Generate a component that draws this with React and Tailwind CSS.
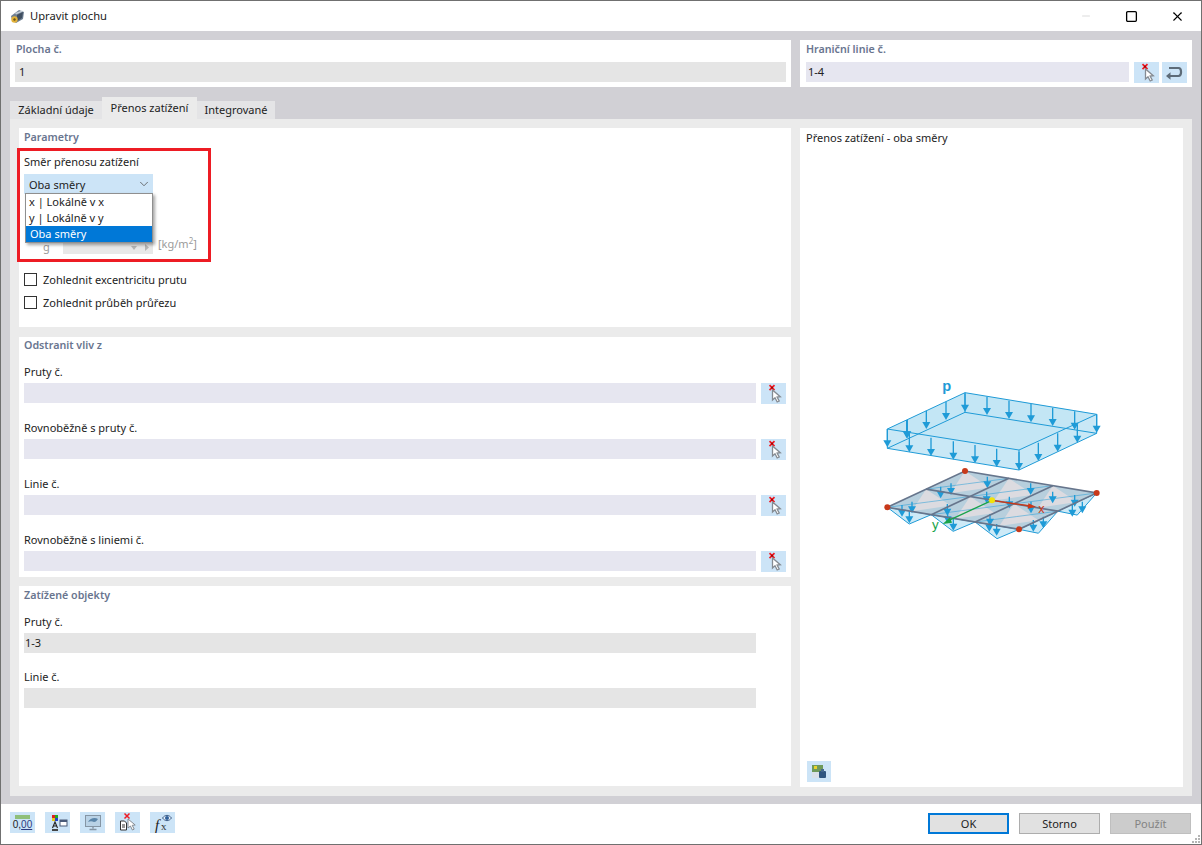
import React from 'react';
import { ChevronDown, Minus, Square, X } from 'lucide-react';

const font = { fontFamily: '"Noto Sans", "Liberation Sans", sans-serif' };

const A = [52, 412];
const U = [395, 66];
const V = [233, -109];
const pt = (u, v, dy = 0) => [A[0] + u * U[0] + v * V[0], A[1] + u * U[1] + v * V[1] + dy];
const str = (pts) => pts.map((p) => p.join(',')).join(' ');
const lerp = (p, q, t) => [p[0] + (q[0] - p[0]) * t, p[1] + (q[1] - p[1]) * t];

const Arrow = ({ x, y, len = 45 }) => (
  <g>
    <line x1={x} y1={y} x2={x} y2={y + len - 12} stroke="#1f9bd7" strokeWidth="4" />
    <polygon points={`${x - 12},${y + len - 18} ${x + 12},${y + len - 18} ${x},${y + len + 3}`} fill="#1f9bd7" />
  </g>
);

const LoadDiagram = () => {
  const cells = [];
  for (let i = 0; i < 3; i++) {
    for (let j = 0; j < 2; j++) {
      const u0 = i / 3, u1 = (i + 1) / 3, v0 = j / 2, v1 = (j + 1) / 2;
      const c = pt((u0 + u1) / 2, (v0 + v1) / 2);
      cells.push({ a: pt(u0, v0), b: pt(u1, v0), d: pt(u1, v1), e: pt(u0, v1), c, key: `${i}-${j}` });
    }
  }
  const frontTeeth = [0, 1, 2].map((i) => [pt(i / 3, 0), pt((i + 1) / 3, 0), pt((i + 0.5) / 3, 0, 39)]);
  const sideTeeth = [0, 1].map((j) => [pt(1, j / 2), pt(1, (j + 1) / 2), pt(1, (j + 0.5) / 2, 39)]);
  return (
    <svg width="240" height="180" viewBox="0 0 720 540" className="block">
      <text x="217" y="62" fontSize="44" fontWeight="700" fill="#1f9bd7" style={{ fontFamily: '"Liberation Sans", sans-serif' }}>p</text>
      {/* load block */}
      <polygon points="52,177 285,68 680,133 680,190 447,300 52,235" fill="#c9e8f6" />
      <polygon points="52,177 285,68 680,133 447,240" fill="#c3e6f5" />
      <g fill="none" stroke="#1f9bd7" strokeWidth="3">
        <polygon points="52,177 285,68 680,133 447,240" />
        <polyline points="52,177 52,235 447,300 680,190 680,133" />
        <line x1="447" y1="240" x2="447" y2="300" />
        <polyline points="52,235 285,127 680,190" />
        <line x1="285" y1="68" x2="285" y2="127" />
      </g>
      {[[285, 70], [351, 80], [417, 92], [483, 102], [548, 113], [614, 124], [680, 133], [110, 150], [169, 122], [228, 95], [52, 177]].map(([x, y]) => (
        <Arrow key={`${x}${y}`} x={x} y={y} len={52} />
      ))}
      {[[118, 192], [183, 203], [250, 214], [315, 225], [380, 236], [447, 245], [505, 218], [563, 190], [622, 163], [112, 150]].map(([x, y]) => (
        <Arrow key={`b${x}${y}`} x={x} y={y} len={52} />
      ))}
      {/* plate */}
      {[...frontTeeth, ...sideTeeth].map((t, i) => (
        <polygon key={i} points={str(t)} fill="#cdeaf7" stroke="#1f9bd7" strokeWidth="3" />
      ))}
      {cells.map((c) => (
        <g key={c.key}>
          <polygon points={str([c.a, c.b, c.d, c.e])} fill="#b7cfdd" />
          <polygon points={str([c.e, lerp(c.a, c.b, 0.55), lerp(c.b, c.d, 0.5)])} fill="#dcdbe0" />
          <path d={`M${c.a.join(' ')}L${c.c.join(' ')}M${c.d.join(' ')}L${c.c.join(' ')}`} stroke="#1f9bd7" strokeWidth="1.5" />
        </g>
      ))}
      {[[96, 405], [126, 395], [118, 425], [212, 350], [243, 340], [232, 402], [250, 447], [352, 320], [482, 340], [350, 365], [418, 380], [483, 395], [614, 375], [548, 365], [360, 432], [380, 462], [358, 450], [490, 450], [520, 440], [607, 405], [637, 395], [233, 425]].map(([x, y]) => (
        <Arrow key={`p${x}${y}`} x={x} y={y} len={32} />
      ))}
      <g stroke="#66758c" strokeWidth="5" fill="none">
        <polygon points={str([pt(0, 0), pt(0, 1), pt(1, 1), pt(1, 0)])} />
        <line x1={pt(0, 0.5)[0]} y1={pt(0, 0.5)[1]} x2={pt(1, 0.5)[0]} y2={pt(1, 0.5)[1]} />
        <line x1={pt(1 / 3, 0)[0]} y1={pt(1 / 3, 0)[1]} x2={pt(1 / 3, 1)[0]} y2={pt(1 / 3, 1)[1]} />
        <line x1={pt(2 / 3, 0)[0]} y1={pt(2 / 3, 0)[1]} x2={pt(2 / 3, 1)[0]} y2={pt(2 / 3, 1)[1]} />
      </g>
      {[[52, 412], [285, 303], [680, 369], [447, 478]].map(([x, y]) => (
        <circle key={x} cx={x} cy={y} r="9" fill="#c8391a" />
      ))}
      {/* axes */}
      <line x1="366" y1="391" x2="480" y2="408" stroke="#c8391a" strokeWidth="4" />
      <polygon points="475,400 498,410 473,416" fill="#c8391a" />
      <line x1="366" y1="391" x2="235" y2="452" stroke="#18a34a" strokeWidth="4" />
      <polygon points="240,442 218,462 246,458" fill="#18a34a" />
      <circle cx="366" cy="391" r="9" fill="#f2e20a" />
      <text x="505" y="428" fontSize="38" fill="#c8391a" style={{ fontFamily: '"Liberation Sans", sans-serif' }}>x</text>
      <text x="186" y="477" fontSize="40" fill="#18a34a" style={{ fontFamily: '"Liberation Sans", sans-serif' }}>y</text>
    </svg>
  );
};

const PickIcon = () => (
  <svg width="25" height="21" viewBox="0 0 25 21">
    <path d="M8.5 2.2l5 5M13.5 2.2l-5 5" stroke="#ee1c25" strokeWidth="1.7" />
    <rect x="10" y="3.7" width="2" height="2" fill="#a00" />
    <path d="M11.5 7v10l2.5-2.2 2.2 4.2 2-1-2.1-4 3.2-.3z" fill="#fff" stroke="#858b92" strokeWidth="1.3" />
  </svg>
);

const ReturnIcon = () => (
  <svg width="25" height="21" viewBox="0 0 25 21">
    <path d="M7 6h9.5c3.4 0 3.4 8 0 8H7" fill="none" stroke="#5d6b78" strokeWidth="2.2" />
    <path d="M8.5 10.3L4 14l4.5 3.7z" fill="#5d6b78" />
  </svg>
);

const IconButton = ({ children, className = '' }) => (
  <button className={`w-[25px] h-[21px] shrink-0 bg-[#cce4f7] flex items-center justify-center ${className}`}>{children}</button>
);

const SectionTitle = ({ children, className = '' }) => (
  <div className={`text-[10.7px] leading-[14px] font-semibold text-[#69758f] ${className}`}>{children}</div>
);

const FieldLabel = ({ children, className = '' }) => (
  <div className={`text-[11px] leading-[14px] text-[#222] ${className}`}>{children}</div>
);

const PickField = ({ label, first }) => (
  <div>
    <FieldLabel className={first ? 'mt-[13px]' : 'mt-[18px]'}>{label}</FieldLabel>
    <div className="flex items-start mt-[4px] gap-[5px] h-[20px]">
      <div className="w-[732px] h-[20px] bg-[#e6e6f0]" />
      <IconButton><PickIcon /></IconButton>
    </div>
  </div>
);

const ReadField = ({ label, value, className }) => (
  <div>
    <FieldLabel className={className}>{label}</FieldLabel>
    <div className="w-[732px] h-[20px] mt-[4px] bg-[#e5e5e5] text-[11px] leading-[20px] px-[1px] text-[#222]">{value}</div>
  </div>
);

const CheckRow = ({ label, className = '' }) => (
  <div className={`flex items-center gap-[6px] ${className}`}>
    <div className="w-[13px] h-[13px] border border-[#333] bg-white" />
    <span className="text-[11px] leading-[13px] text-[#222]">{label}</span>
  </div>
);

const Tab = ({ label, active, className = '' }) => (
  <div className={`text-[11px] flex items-center justify-center text-[#222] ${active ? 'h-[22px] bg-[#ebebeb]' : 'h-[18px] bg-[#e4e4e6]'} ${className}`}>{label}</div>
);

const FooterButton = ({ children, className = 'bg-[#e1e1e1] border border-[#adadad] text-[#222]' }) => (
  <button className={`w-[81px] h-[21px] text-[11px] leading-none flex items-center justify-center ${className}`}>{children}</button>
);

export default function App() {
  return (
    <div style={font} className="relative w-[1202px] h-[845px] flex flex-col bg-white border border-[#707070] overflow-hidden">
      {/* title bar */}
      <div className="h-[30px] flex items-center shrink-0">
        <svg width="17" height="17" viewBox="0 0 17 17" className="ml-[8px]">
          <path d="M2 8l8-6 5 2-1 7-7 4-4-3z" fill="#6f7f92" />
          <path d="M6 5l7-2.5 1 1-7 3z" fill="#c5ced8" />
          <path d="M8 7l6-3-1 6-5 3z" fill="#3f4e60" />
          <circle cx="5.5" cy="11.5" r="3.2" fill="#e2b23a" />
          <circle cx="5.5" cy="11.5" r="1.2" fill="#6b5514" />
        </svg>
        <span className="ml-[4px] text-[11.2px] text-[#1a1a1a]">Upravit plochu</span>
        <div className="ml-auto flex items-center h-full">
          <Minus size={12} className="text-[#c4c4c4] mr-[33px]" strokeWidth={1.2} />
          <Square size={13} className="text-black mr-[32px]" strokeWidth={1.3} absoluteStrokeWidth />
          <X size={15} className="text-black mr-[16px]" strokeWidth={1.1} absoluteStrokeWidth />
        </div>
      </div>

      {/* main area */}
      <div className="flex-1 bg-[#d1d0d5] px-[9px] pt-[9px]">
        <div className="flex gap-[9px] h-[47px]">
          <div className="w-[781px] bg-white px-[5px]">
            <SectionTitle className="mt-[2px] ml-[1px]">Plocha č.</SectionTitle>
            <div className="mt-[6px] h-[20px] bg-[#e5e5e5] text-[11px] leading-[20px] px-[4px] text-[#222]">1</div>
          </div>
          <div className="w-[392px] bg-white pl-[6px]">
            <SectionTitle className="mt-[2px]">Hraniční linie č.</SectionTitle>
            <div className="flex items-start mt-[6px]">
              <div className="w-[323px] h-[20px] bg-[#e6e6f0] text-[11px] leading-[20px] px-[2px] text-[#222]">1-4</div>
              <IconButton className="ml-[5px]"><PickIcon /></IconButton>
              <IconButton className="ml-[3px]"><ReturnIcon /></IconButton>
            </div>
          </div>
        </div>

        {/* tabs */}
        <div className="flex items-end h-[22px] mt-[10px]">
          <Tab label="Základní údaje" className="w-[92px]" />
          <Tab label="Přenos zatížení" active className="w-[95px]" />
          <Tab label="Integrované" className="w-[78px]" />
        </div>

        <div className="bg-[#ebebeb] h-[677px] p-[9px] flex gap-[9px]">
          <div className="w-[772px] flex flex-col">
            {/* parametry */}
            <div className="relative h-[199px] bg-white px-[5px]">
              <SectionTitle className="pt-[2px]">Parametry</SectionTitle>
              <FieldLabel className="mt-[11px]">Směr přenosu zatížení</FieldLabel>
              <div className="relative mt-[5px] w-[129px] h-[20px] bg-[#cce4f7] flex items-center justify-between pl-[5px] pr-[2px] text-[11px] text-[#222]">
                <span className="pt-[2px]">Oba směry</span>
                <ChevronDown size={14} className="text-[#555]" strokeWidth={1.4} />
                <div className="absolute left-[1px] top-[19px] w-[128px] h-[50px] z-10 bg-white border border-[#8f8f8f] shadow-[2px_2px_3px_rgba(0,0,0,0.35)] text-[11px] leading-[16px] text-[#222]">
                  <div className="pl-[3px]">x | Lokálně v x</div>
                  <div className="pl-[3px]">y | Lokálně v y</div>
                  <div className="pl-[4px] bg-[#0078d7] text-white">Oba směry</div>
                </div>
              </div>
              <div className="flex items-center mt-[40px] h-[20px] text-[11px] text-[#9a9a9a]">
                <span className="ml-[19px] w-[20px] leading-[12px] pt-[6px]">g</span>
                <div className="w-[90px] h-[20px] bg-[#e8e8e8] flex items-end justify-end pr-[3px] pb-[3px] gap-[6px]">
                  <svg width="20" height="7" viewBox="0 0 20 7" fill="#b5b5b5">
                    <path d="M1 2h6L4 6zM15 0l4 3.5-4 3.5z" />
                  </svg>
                </div>
                <span className="ml-[5px]">[kg/m<sup className="text-[8px]">2</sup>]</span>
              </div>
              <CheckRow label="Zohlednit excentricitu prutu" className="mt-[19px]" />
              <CheckRow label="Zohlednit průběh průřezu" className="mt-[10px]" />
              {/* red highlight */}
              <div className="absolute left-[-2px] top-[20px] w-[194px] h-[114px] border-[3px] border-[#ed1c24] z-20 pointer-events-none" />
            </div>

            {/* odstranit vliv */}
            <div className="h-[240px] mt-[10px] bg-white px-[5px]">
              <SectionTitle className="pt-[1px]">Odstranit vliv z</SectionTitle>
              <PickField label="Pruty č." first />
              <PickField label="Rovnoběžně s pruty č." />
              <PickField label="Linie č." />
              <PickField label="Rovnoběžně s liniemi č." />
            </div>

            {/* zatizene objekty */}
            <div className="h-[200px] mt-[9px] bg-white px-[5px]">
              <SectionTitle className="pt-[2px]">Zatížené objekty</SectionTitle>
              <ReadField label="Pruty č." value="1-3" className="mt-[13px]" />
              <ReadField label="Linie č." value="" className="mt-[17px]" />
            </div>
          </div>

          {/* preview */}
          <div className="w-[383px] bg-white flex flex-col px-[6px]">
            <div className="mt-[3px] text-[11px] leading-[14px] text-[#222]">Přenos zatížení - oba směry</div>
            <div className="flex justify-center mt-[225px] pr-[4px]">
              <LoadDiagram />
            </div>
            <button className="mt-auto mb-[5px] ml-[1px] w-[24px] h-[21px] bg-[#cce4f7] flex items-center justify-center">
              <svg width="18" height="18" viewBox="0 0 18 18">
                <rect x="2" y="2" width="11" height="7" fill="#6f9a5a" />
                <rect x="4" y="3" width="3" height="3" fill="#e9d32a" />
                <rect x="2" y="9" width="11" height="6" fill="#d9e0e8" />
                <rect x="9" y="8" width="7" height="7" rx="1" fill="#2f5680" />
                <rect x="11" y="6" width="3" height="3" fill="#44688e" />
              </svg>
            </button>
          </div>
        </div>
      </div>

      {/* footer */}
      <div className="h-[40px] shrink-0 relative flex items-start pt-[8px] pl-[9px] pr-[9px]">
        <div className="flex gap-[10px]">
          <IconButton>
            <div className="flex flex-col items-center">
              <div className="w-[15px] h-[4px] bg-[#8fbf7a]" />
              <span className="text-[10px] leading-[12px] text-[#222]" style={{ fontFamily: '"Liberation Sans", sans-serif' }}>
                0,<span className="underline text-[#2b3a80]">00</span>
              </span>
            </div>
          </IconButton>
          <IconButton>
            <svg width="20" height="19" viewBox="0 0 20 19">
              <rect x="4" y="2" width="3" height="3" fill="#d22" />
              <rect x="7" y="2" width="3" height="3" fill="#2a2" />
              <rect x="4" y="5" width="3" height="3" fill="#e5c91d" />
              <rect x="7" y="5" width="3" height="3" fill="#24c" />
              <rect x="12" y="7" width="7" height="6" fill="#fff" stroke="#4a5a78" />
              <rect x="12" y="7" width="7" height="2" fill="#4a5a78" />
              <path d="M4.5 15L7 9l2.5 6M5.5 13h3" fill="none" stroke="#222" strokeWidth="1.1" />
              <rect x="4" y="16" width="6" height="2" fill="#444" />
            </svg>
          </IconButton>
          <IconButton>
            <svg width="20" height="18" viewBox="0 0 20 18">
              <rect x="2.5" y="1.5" width="15" height="11" fill="#b9d2e6" stroke="#8595a4" />
              <path d="M5 8c2-4 7-5 10-3-1 1-2 3-4 3-2-1-4-1-6 0z" fill="#5c86aa" />
              <path d="M10 12.5v2M6.5 15.5h7" stroke="#8595a4" strokeWidth="1.4" />
            </svg>
          </IconButton>
          <IconButton>
            <svg width="25" height="21" viewBox="0 0 25 21">
              <path d="M9.5 1.5l5 5M14.5 1.5l-5 5" stroke="#ee1c25" strokeWidth="1.5" />
              <path d="M13 7v9l2.4-2 2 4 1.8-.9-2-3.8 3-.3z" fill="#fff" stroke="#858b92" />
              <path d="M5.5 9h4l2 2v7h-6z" fill="#fff" stroke="#333" />
              <path d="M7 13h3M7 15h3" stroke="#333" />
            </svg>
          </IconButton>
          <IconButton>
            <div className="relative w-[25px] h-[21px]">
              <span className="absolute left-[5px] top-[2px] text-[15px] italic text-[#222]" style={{ fontFamily: '"Liberation Serif", serif' }}>f</span>
              <span className="absolute left-[11px] top-[6px] text-[11px] text-[#333]" style={{ fontFamily: '"Liberation Serif", serif' }}>x</span>
              <svg width="10" height="8" viewBox="0 0 10 8" className="absolute left-[12px] top-[2px]">
                <path d="M0.5 4C3 .5 7 .5 9.5 4 7 7.5 3 7.5 .5 4z" fill="#e8f0f8" stroke="#3f5f8a" />
                <circle cx="5" cy="4" r="2" fill="#2f5f9a" />
              </svg>
            </div>
          </IconButton>
        </div>
        <div className="ml-auto flex gap-[10px] pt-[1px] pr-[1px]">
          <FooterButton className="bg-[#e1e1e1] border-2 border-[#0078d7] text-[#222]">OK</FooterButton>
          <FooterButton>Storno</FooterButton>
          <FooterButton className="bg-[#cccccc] text-[#838383] border border-[#bfbfbf]">Použít</FooterButton>
        </div>
        <svg width="10" height="10" viewBox="0 0 10 10" className="absolute right-0 bottom-0" fill="#b5b5b5">
          <rect x="7" y="1" width="2" height="2" />
          <rect x="4" y="4" width="2" height="2" />
          <rect x="7" y="4" width="2" height="2" />
          <rect x="1" y="7" width="2" height="2" />
          <rect x="4" y="7" width="2" height="2" />
          <rect x="7" y="7" width="2" height="2" />
        </svg>
      </div>
    </div>
  );
}
